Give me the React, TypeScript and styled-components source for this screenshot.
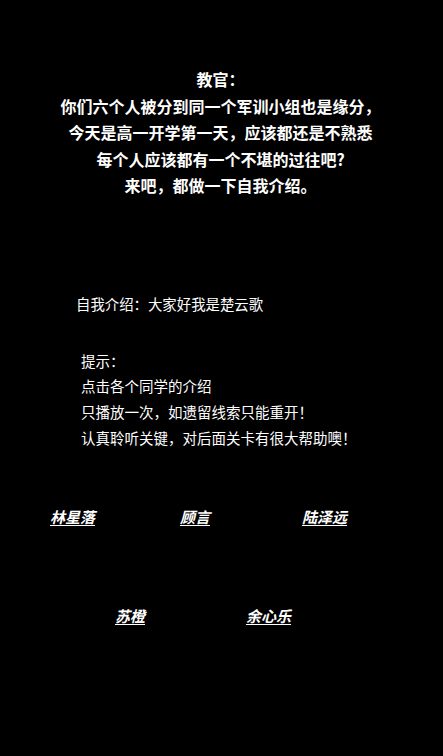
import React from 'react'
import styled, { createGlobalStyle } from 'styled-components'

const Global = createGlobalStyle`
  html, body {
    margin: 0;
    padding: 0;
    background: #000;
  }
  body {
    font-family: "Noto Sans CJK SC", "Noto Sans", sans-serif;
    color: #fff;
  }
`

const Page = styled.div`
  width: 443px;
  height: 756px;
  background: #000;
  overflow: hidden;
  display: flex;
  flex-direction: column;
`

const Speech = styled.div`
  margin-top: 66px;
  text-align: center;
  font-size: 16px;
  font-weight: 700;
  line-height: 26.5px;
  padding-right: 2px;
`

const Intro = styled.div`
  margin-top: 92px;
  padding-left: 76px;
  font-size: 14.4px;
  line-height: 26px;
`

const Tips = styled.div`
  margin-top: 31px;
  padding-left: 81px;
  font-size: 14.5px;
  line-height: 25.8px;
`

const NameRow = styled.div<{ $left: number; $top: number }>`
  display: flex;
  margin-top: ${p => p.$top}px;
  padding-left: ${p => p.$left}px;
`

const Name = styled.a<{ $space?: number }>`
  margin-left: ${p => p.$space ?? 0}px;
  font-size: 15px;
  font-weight: 700;
  font-style: italic;
  text-decoration: underline;
  text-underline-offset: 2px;
  color: #fff;
  cursor: pointer;
  line-height: 22px;
`

const App: React.FC = () => {
  return (
    <>
      <Global />
      <Page>
        <Speech>
          <div>教官：</div>
          <div>你们六个人被分到同一个军训小组也是缘分，</div>
          <div>今天是高一开学第一天，应该都还是不熟悉</div>
          <div>每个人应该都有一个不堪的过往吧?</div>
          <div>来吧，都做一下自我介绍。</div>
        </Speech>
        <Intro>自我介绍：大家好我是楚云歌</Intro>
        <Tips>
          <div>提示：</div>
          <div>点击各个同学的介绍</div>
          <div>只播放一次，如遗留线索只能重开！</div>
          <div>认真聆听关键，对后面关卡有很大帮助噢！</div>
        </Tips>
        <NameRow $top={55} $left={50}>
          <Name>林星落</Name>
          <Name $space={85}>顾言</Name>
          <Name $space={92}>陆泽远</Name>
        </NameRow>
        <NameRow $top={77} $left={115}>
          <Name>苏橙</Name>
          <Name $space={101}>余心乐</Name>
        </NameRow>
      </Page>
    </>
  )
}

export default App
